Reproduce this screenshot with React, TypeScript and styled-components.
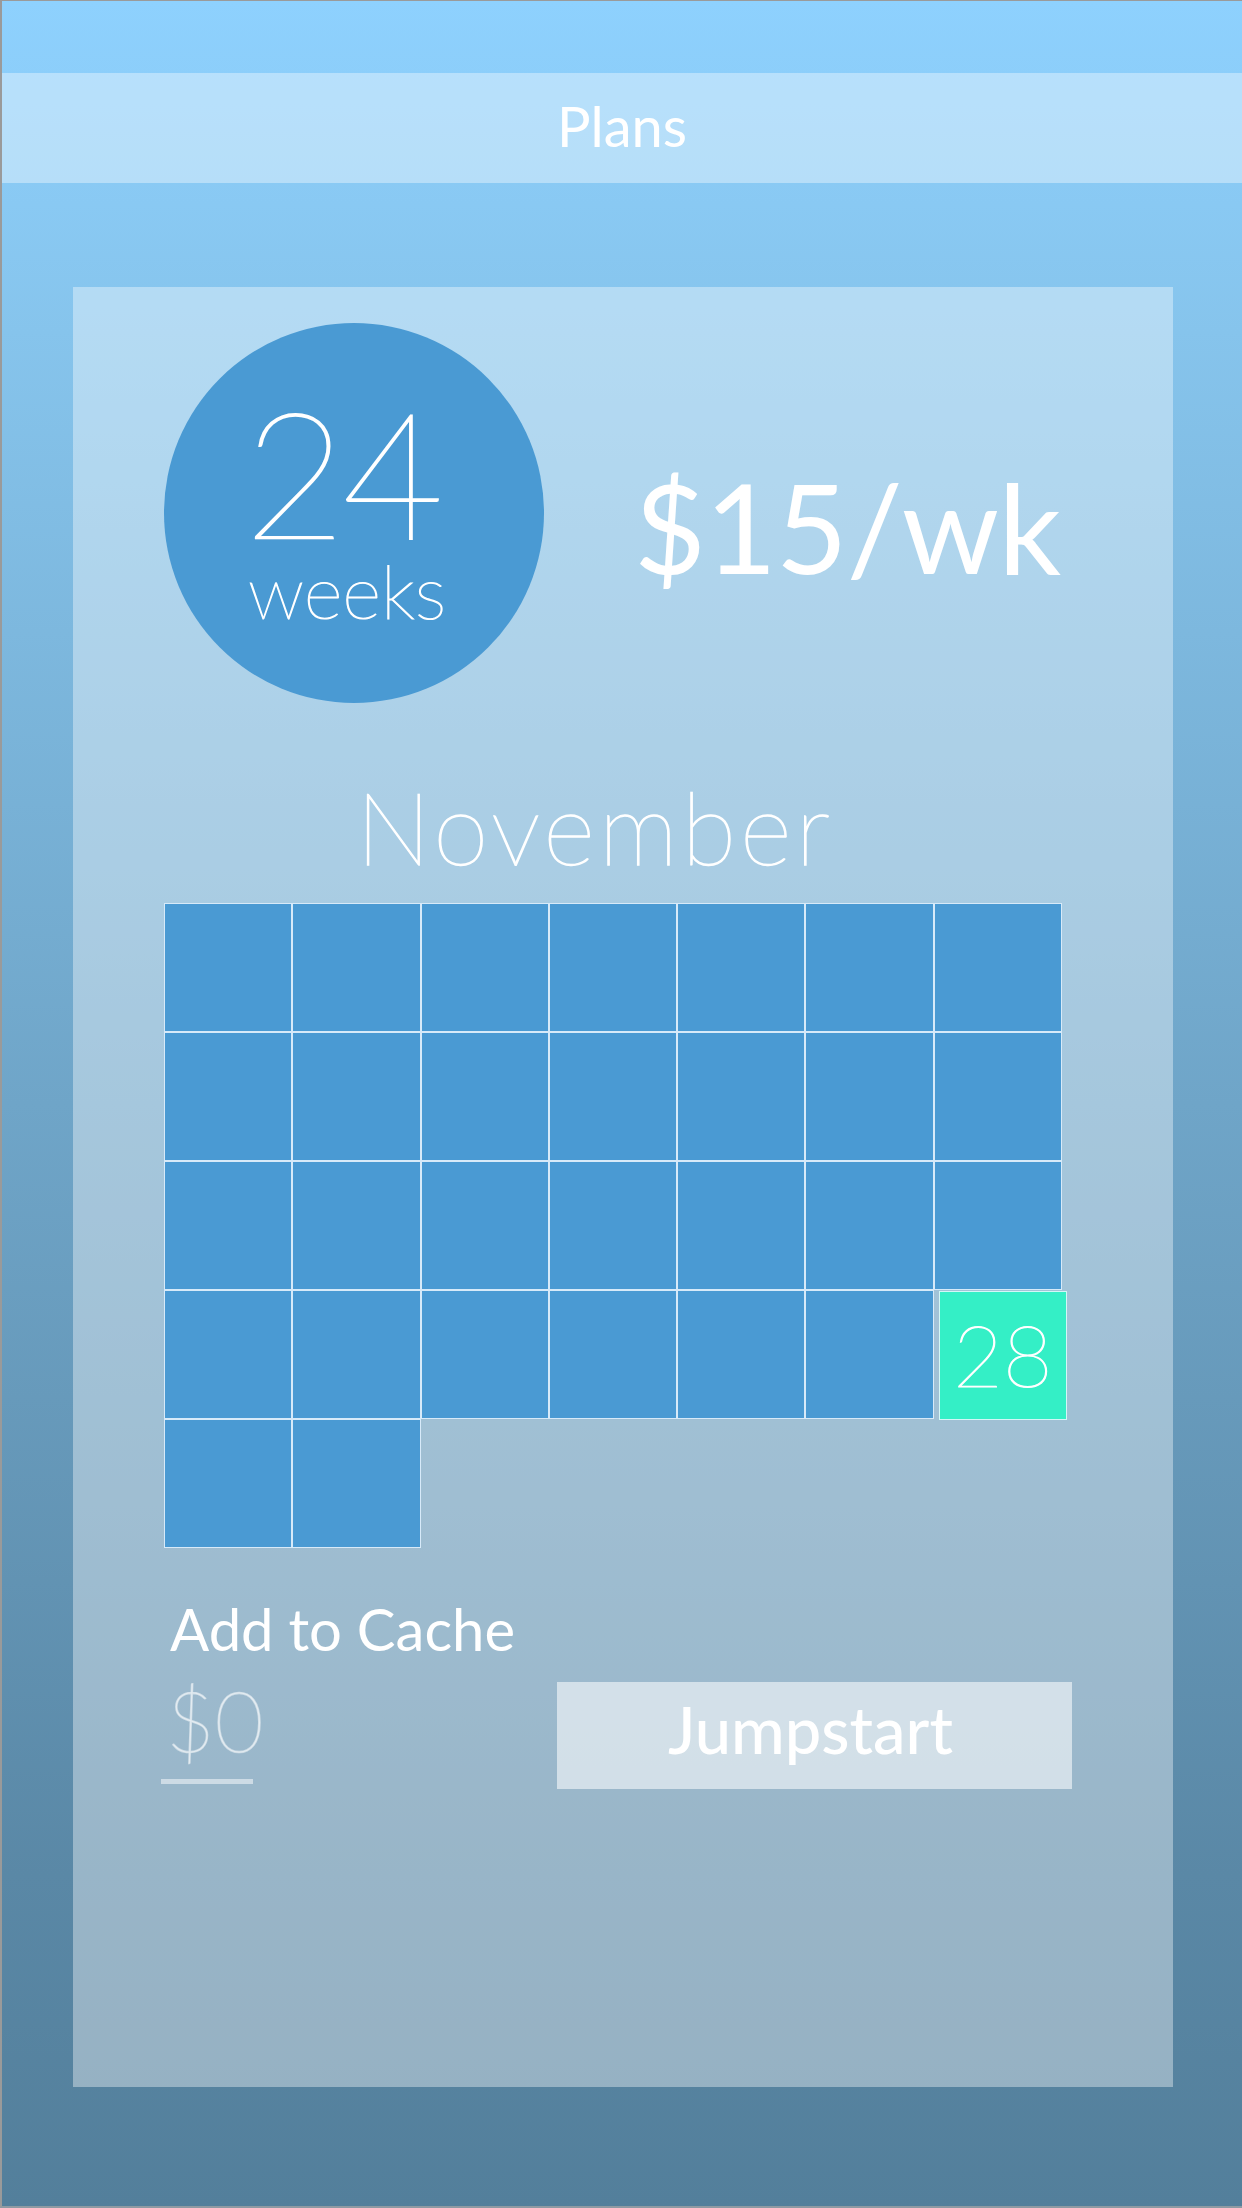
import React from "react";
import styled, { createGlobalStyle } from "styled-components";

const Global = createGlobalStyle`
  html, body { margin: 0; padding: 0; }
  body { font-family: Lato, "Open Sans", sans-serif; }
  * { box-sizing: border-box; }
`;

const Screen = styled.div`
  width: 1242px;
  height: 2208px;
  border-top: 1px solid #9a9a9a;
  border-left: 2px solid #9a9a9a;
  border-bottom: 2px solid #8e9aa3;
  background: linear-gradient(180deg, #8ed1fe 0%, #86c4ec 15%, #6fa5c8 50%, #5a88a6 85%, #537f9b 100%);
  padding-top: 72px;
  overflow: hidden;
`;

const Header = styled.header`
  height: 110px;
  background: rgba(255, 255, 255, 0.38);
  display: flex;
  align-items: center;
  justify-content: center;
  color: #fff;
  font-size: 56px;
  font-weight: 400;
  line-height: 1;
  padding-bottom: 4px;
`;

const Card = styled.main`
  margin: 104px 0 0 71px;
  width: 1100px;
  height: 1800px;
  background: rgba(255, 255, 255, 0.38);
  color: #fff;
  display: flex;
  flex-direction: column;
`;

const TopRow = styled.section`
  display: flex;
  align-items: flex-start;
  padding-left: 91px;
`;

const Circle = styled.div`
  margin-top: 36px;
  width: 380px;
  height: 380px;
  border-radius: 50%;
  background: #4a9ad3;
  display: flex;
  flex-direction: column;
  align-items: flex-start;
  padding: 65px 0 0 80px;
`;

const BigNumber = styled.div`
  font-size: 176px;
  font-weight: 100;
  -webkit-text-stroke: 1.8px #fff;
  line-height: 165px;
  height: 165px;
  letter-spacing: -4px;
`;

const Unit = styled.div`
  font-size: 75px;
  font-weight: 100;
  -webkit-text-stroke: 1.2px #fff;
  line-height: 75px;
  height: 75px;
  padding-left: 4px;
`;

const Price = styled.div`
  margin: 177px 0 0 90px;
  font-size: 124px;
  font-weight: 400;
  line-height: 1;
  letter-spacing: -1px;
`;

const Month = styled.h2`
  margin: 73px 0 0 283px;
  font-size: 100px;
  font-weight: 100;
  -webkit-text-stroke: 1.4px #fff;
  line-height: 1;
  height: 100px;
  letter-spacing: 4px;
`;

const Grid = styled.div`
  margin: 27px 0 0 91px;
  width: 898px;
  display: grid;
  grid-template-columns: repeat(7, 1fr);
  grid-auto-rows: 129px;
`;

const Day = styled.div<{ $today?: boolean }>`
  border: 1px solid rgba(240, 248, 255, 0.85);
  background: ${(p) => (p.$today ? "#34efc6" : "#4a9ad3")};
  display: flex;
  align-items: center;
  justify-content: center;
  font-size: 86px;
  font-weight: 100;
  -webkit-text-stroke: 1.1px #fff;
  line-height: 1;
  padding-bottom: 4px;
  ${(p) => (p.$today ? "transform: translate(5px, 1px);" : "")}
`;

const CacheLabel = styled.div`
  margin: 52px 0 0 97px;
  font-size: 58px;
  font-weight: 400;
  line-height: 1;
`;

const BottomRow = styled.section`
  display: flex;
  align-items: flex-start;
  margin: 20px 0 0 88px;
`;

const AmountField = styled.div`
  width: 92px;
  display: flex;
  flex-direction: column;
`;

const Amount = styled.div`
  padding-left: 5px;
  font-size: 84px;
  font-weight: 100;
  line-height: 1;
  color: rgba(255, 255, 255, 0.5);
  -webkit-text-stroke: 1.6px rgba(255, 255, 255, 0.5);
`;

const Underline = styled.div`
  margin-top: 17px;
  height: 5px;
  background: rgba(255, 255, 255, 0.5);
`;

const Button = styled.button`
  margin: 4px 0 0 304px;
  width: 515px;
  height: 107px;
  border: none;
  background: rgba(255, 255, 255, 0.56);
  color: #fff;
  font-family: Lato, "Open Sans", sans-serif;
  font-size: 65px;
  font-weight: 500;
  line-height: 1;
  padding: 0 8px 12px 0;
  display: flex;
  align-items: center;
  justify-content: center;
`;

const days = Array.from({ length: 30 }, (_, i) => i + 1);

export default function App() {
  return (
    <>
      <Global />
      <Screen>
        <Header>Plans</Header>
        <Card>
          <TopRow>
            <Circle>
              <BigNumber>24</BigNumber>
              <Unit>weeks</Unit>
            </Circle>
            <Price>$15/wk</Price>
          </TopRow>
          <Month>November</Month>
          <Grid>
            {days.map((d) => (
              <Day key={d} $today={d === 28}>
                {d === 28 ? "28" : null}
              </Day>
            ))}
          </Grid>
          <CacheLabel>Add to Cache</CacheLabel>
          <BottomRow>
            <AmountField>
              <Amount>$0</Amount>
              <Underline />
            </AmountField>
            <Button>Jumpstart</Button>
          </BottomRow>
        </Card>
      </Screen>
    </>
  );
}
